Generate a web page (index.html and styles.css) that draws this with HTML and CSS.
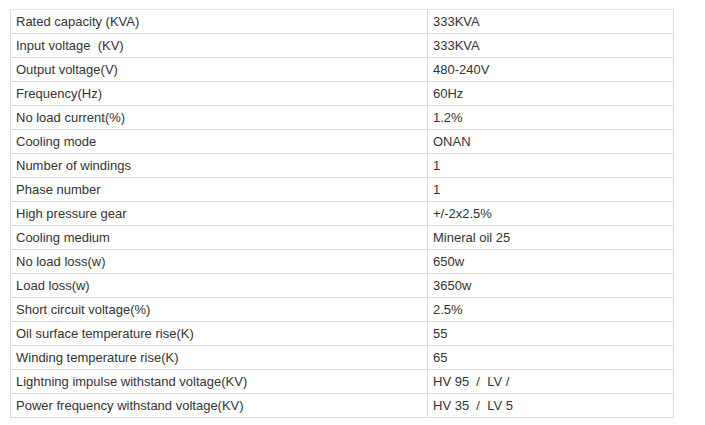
FILE: index.html
```html
<!DOCTYPE html>
<html>
<head>
<meta charset="utf-8">
<link rel="stylesheet" href="styles.css">
</head>
<body>
<table class="spec">
<colgroup><col class="c1"><col class="c2"></colgroup>
<tbody>
<tr><td>Rated capacity (KVA)</td><td>333KVA</td></tr>
<tr><td>Input voltage&nbsp; (KV)</td><td>333KVA</td></tr>
<tr><td>Output voltage(V)</td><td>480-240V</td></tr>
<tr><td>Frequency(Hz)</td><td>60Hz</td></tr>
<tr><td>No load current(%)</td><td>1.2%</td></tr>
<tr><td>Cooling mode</td><td>ONAN</td></tr>
<tr><td>Number of windings</td><td>1</td></tr>
<tr><td>Phase number</td><td>1</td></tr>
<tr><td>High pressure gear</td><td>+/-2x2.5%</td></tr>
<tr><td>Cooling medium</td><td>Mineral oil 25</td></tr>
<tr><td>No load loss(w)</td><td>650w</td></tr>
<tr><td>Load loss(w)</td><td>3650w</td></tr>
<tr><td>Short circuit voltage(%)</td><td>2.5%</td></tr>
<tr><td>Oil surface temperature rise(K)</td><td>55</td></tr>
<tr><td>Winding temperature rise(K)</td><td>65</td></tr>
<tr><td>Lightning impulse withstand voltage(KV)</td><td>HV 95&nbsp; /&nbsp; LV /</td></tr>
<tr><td>Power frequency withstand voltage(KV)</td><td>HV 35&nbsp; /&nbsp; LV 5</td></tr>
</tbody>
</table>
</body>
</html>
```
FILE: styles.css
```css
html, body {
  margin: 0;
  padding: 0;
  background: #ffffff;
}
body {
  padding: 9px 0 0 10px;
  font-family: "Liberation Sans", Arial, sans-serif;
}
.spec {
  border-collapse: collapse;
  width: 664px;
  table-layout: fixed;
  font-size: 13px;
  color: #333333;
}
.c1 { width: 417px; }
.spec td {
  border: 1px solid #dcdcdc;
  height: 24px;
  padding: 0 5px;
  box-sizing: border-box;
  line-height: 22px;
  vertical-align: middle;
  white-space: nowrap;
}
.spec tr:first-child td {
  border-top-color: #e6e6e6;
}
```
